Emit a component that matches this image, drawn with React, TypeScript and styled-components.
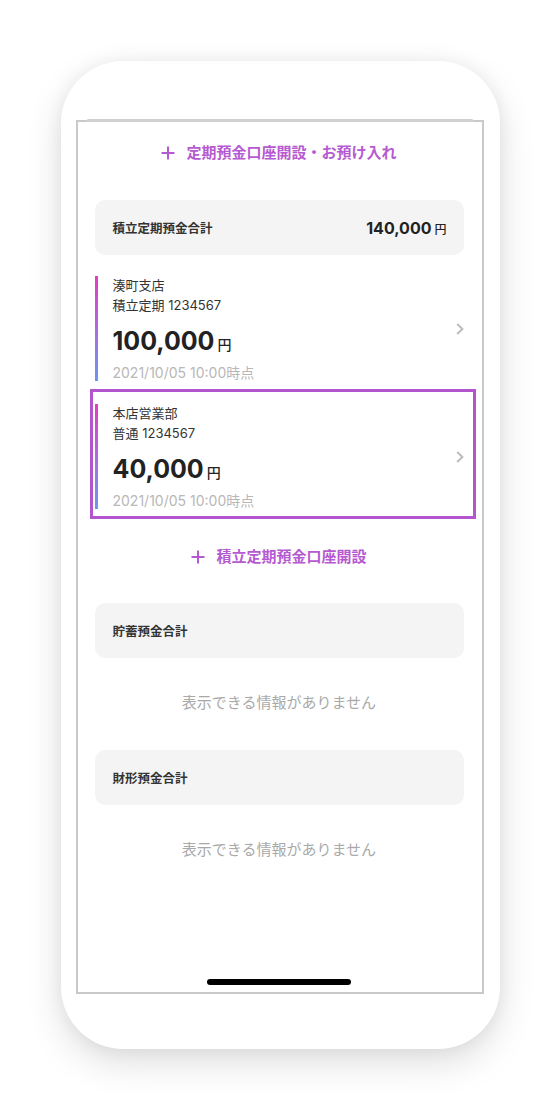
import React, { FC } from 'react';
import styled, { createGlobalStyle } from 'styled-components';

const GlobalStyle = createGlobalStyle`
  html, body {
    margin: 0;
    padding: 0;
    background: #ffffff;
  }

  body {
    font-family: Inter, "Noto Sans CJK JP", sans-serif;
    color: #222222;
  }
`;

type Account = {
  branch: string;
  kind: string;
  number: string;
  amount: string;
  date: string;
  selected?: boolean;
};

const accounts: Account[] = [
  {
    branch: '湊町支店',
    kind: '積立定期',
    number: '1234567',
    amount: '100,000',
    date: '2021/10/05 10:00時点',
  },
  {
    branch: '本店営業部',
    kind: '普通',
    number: '1234567',
    amount: '40,000',
    date: '2021/10/05 10:00時点',
    selected: true,
  },
];

const Page = styled.div`
  width: 560px;
  height: 1108px;
  padding-top: 61px;
  box-sizing: border-box;
  display: flex;
  justify-content: center;
  align-items: flex-start;
`;

const Phone = styled.div`
  width: 439px;
  height: 988px;
  box-sizing: border-box;
  padding: 59px 16px 0 15px;
  background: #ffffff;
  border-radius: 62px;
  box-shadow: 0 14px 36px rgba(0, 0, 0, 0.13), 0 0 18px rgba(0, 0, 0, 0.06);
`;

const Screen = styled.div`
  position: relative;
  height: 874px;
  box-sizing: border-box;
  border: 2px solid #c9c9c9;
  display: flex;
  flex-direction: column;
  padding: 0 18px 0 17px;

  &::before {
    content: '';
    position: absolute;
    top: -3px;
    left: 8px;
    right: 8px;
    height: 3px;
    background: #d0d0d0;
    border-radius: 3px 3px 0 0;
  }
`;

const AddLink = styled.a<{ $top?: number }>`
  display: flex;
  align-items: center;
  justify-content: center;
  gap: 11px;
  margin-top: ${(p) => p.$top ?? 0}px;
  padding: 20px 0;
  line-height: 22px;
  font-size: 15px;
  font-weight: 700;
  color: #b65ad1;
  text-decoration: none;
  cursor: pointer;

  svg {
    flex-shrink: 0;
  }
`;

const SumCard = styled.div<{ $top?: number }>`
  display: flex;
  align-items: center;
  justify-content: space-between;
  height: 55px;
  margin-top: ${(p) => p.$top ?? 0}px;
  padding: 0 17px 0 18px;
  background: #f4f4f4;
  border-radius: 10px;
`;

const SumLabel = styled.span`
  font-size: 12.5px;
  font-weight: 700;
  color: #333333;
`;

const Amount = styled.span<{ $size: number }>`
  display: inline-flex;
  align-items: baseline;
  gap: 3px;
  font-size: ${(p) => p.$size}px;
  font-weight: 700;
  color: #222222;
`;

const Yen = styled.span<{ $size: number }>`
  font-size: ${(p) => p.$size}px;
  font-weight: 500;
`;

const AccountList = styled.div`
  display: flex;
  flex-direction: column;
  gap: 23px;
  margin-top: 21px;
`;

const AccountItem = styled.div<{ $selected?: boolean }>`
  position: relative;
  display: flex;
  align-items: center;
  height: 105px;
  cursor: pointer;

  &::after {
    content: ${(p) => (p.$selected ? "''" : 'none')};
    position: absolute;
    top: -15px;
    left: -5px;
    right: -12px;
    bottom: -10px;
    border: 3px solid #b455d0;
    pointer-events: none;
  }
`;

const Bar = styled.div`
  align-self: stretch;
  width: 3px;
  flex-shrink: 0;
  background: linear-gradient(180deg, #e53bc2 0%, #a66fe2 55%, #6698ef 100%);
`;

const AccountBody = styled.div`
  flex: 1;
  display: flex;
  flex-direction: column;
  padding-left: 15px;
  padding-top: 1px;
`;

const InfoLine = styled.div`
  font-size: 13px;
  line-height: 20px;
  color: #333333;
`;

const AmountLine = styled.div`
  margin-top: 8px;
  line-height: 36px;
`;

const DateLine = styled.div`
  font-size: 14px;
  line-height: 20px;
  color: #b8b8b8;
`;

const Chevron = styled.svg`
  flex-shrink: 0;
`;

const EmptyText = styled.div`
  padding: 34px 0 36px;
  line-height: 22px;
  font-size: 15px;
  text-align: center;
  color: #a9a9a9;
`;

const HomeIndicator = styled.div`
  margin: auto auto 7px;
  width: 144px;
  height: 6px;
  border-radius: 3px;
  background: #000000;
`;

const PlusIcon: FC = () => (
  <svg width="14" height="14" viewBox="0 0 14 14" fill="none">
    <path d="M7 0.5V13.5M0.5 7H13.5" stroke="#b65ad1" strokeWidth="2" />
  </svg>
);

const AccountRow: FC<{ account: Account }> = ({ account }) => (
  <AccountItem $selected={account.selected}>
    <Bar />
    <AccountBody>
      <InfoLine>{account.branch}</InfoLine>
      <InfoLine>
        {account.kind}
        {' '}
        {account.number}
      </InfoLine>
      <AmountLine>
        <Amount $size={25}>
          {account.amount}
          <Yen $size={14}>円</Yen>
        </Amount>
      </AmountLine>
      <DateLine>{account.date}</DateLine>
    </AccountBody>
    <Chevron width="8" height="12" viewBox="0 0 8 12" fill="none">
      <path d="M1.2 1L6.4 6L1.2 11" stroke="#bdbdbd" strokeWidth="2" />
    </Chevron>
  </AccountItem>
);

export default function App(): React.ReactElement {
  return (
    <>
      <GlobalStyle />
      <Page>
        <Phone>
          <Screen>
            <AddLink>
              <PlusIcon />
              定期預金口座開設・お預け入れ
            </AddLink>

            <SumCard $top={16}>
              <SumLabel>積立定期預金合計</SumLabel>
              <Amount $size={16}>
                140,000
                <Yen $size={12}>円</Yen>
              </Amount>
            </SumCard>

            <AccountList>
              {accounts.map((account) => (
                <AccountRow key={account.branch} account={account} />
              ))}
            </AccountList>

            <AddLink $top={17}>
              <PlusIcon />
              積立定期預金口座開設
            </AddLink>

            <SumCard $top={15}>
              <SumLabel>貯蓄預金合計</SumLabel>
            </SumCard>
            <EmptyText>表示できる情報がありません</EmptyText>

            <SumCard>
              <SumLabel>財形預金合計</SumLabel>
            </SumCard>
            <EmptyText>表示できる情報がありません</EmptyText>

            <HomeIndicator />
          </Screen>
        </Phone>
      </Page>
    </>
  );
}
